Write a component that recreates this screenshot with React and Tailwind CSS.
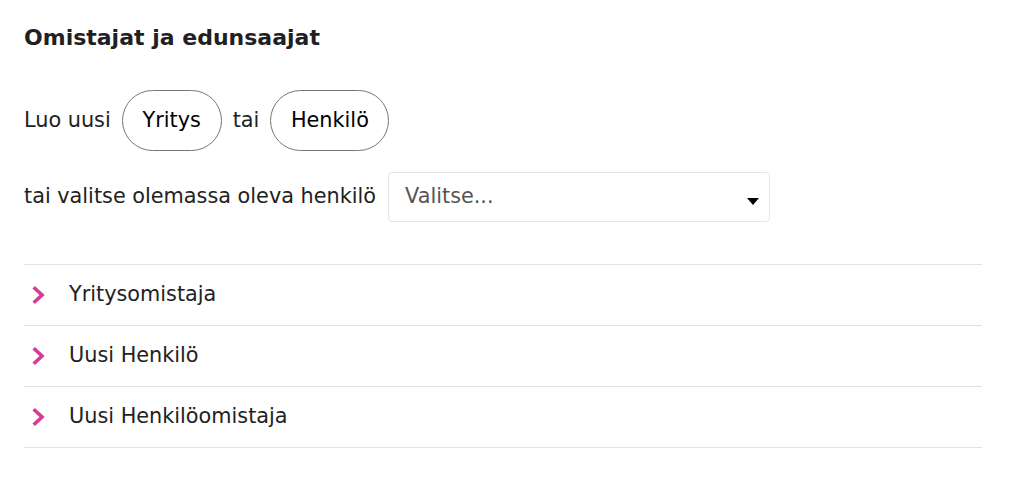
import React from "react";

const rows = ["Yritysomistaja", "Uusi Henkilö", "Uusi Henkilöomistaja"];

function Chevron() {
  return (
    <svg width="14" height="18" viewBox="0 0 14 18" className="shrink-0">
      <path d="M3 2.5 L10 9 L3 15.5" fill="none" stroke="#d63a96" strokeWidth="3.6" strokeLinecap="square" />
    </svg>
  );
}

export default function App() {
  return (
    <div
      className="bg-white text-[#222] px-6 pt-[22px] min-h-[486px]"
      style={{ fontFamily: '"DejaVu Sans", "Liberation Sans", sans-serif' }}
    >
      <h2 className="text-[22px] font-bold leading-8 text-[#1f1f24]">Omistajat ja edunsaajat</h2>

      <div className="flex items-center gap-[11px] mt-[36px] text-[20.8px]">
        <span>Luo uusi</span>
        <button className="w-[100px] h-[61px] rounded-full border border-[#777] text-black">Yritys</button>
        <span>tai</span>
        <button className="w-[119px] h-[61px] rounded-full border border-[#777] text-black">Henkilö</button>
      </div>

      <div className="flex items-center gap-3 mt-[21px] text-[20.8px]">
        <span>tai valitse olemassa oleva henkilö</span>
        <div className="relative w-[382px] h-[50px] border border-[#e6e6e6] rounded flex items-center pl-4 text-[#555]">
          Valitse...
          <svg width="12" height="7" viewBox="0 0 12 7" className="absolute right-[10px] top-[25px]">
            <path d="M0 0 H12 L6 7 Z" fill="#000" />
          </svg>
        </div>
      </div>

      <div className="mt-[42px] w-[958px] border-t border-[#e2e2e2]">
        {rows.map((r) => (
          <div key={r} className="flex items-center h-[61px] border-b border-[#e2e2e2] pl-[8px] gap-[23px] text-[20.8px]">
            <Chevron />
            <span>{r}</span>
          </div>
        ))}
      </div>
    </div>
  );
}
